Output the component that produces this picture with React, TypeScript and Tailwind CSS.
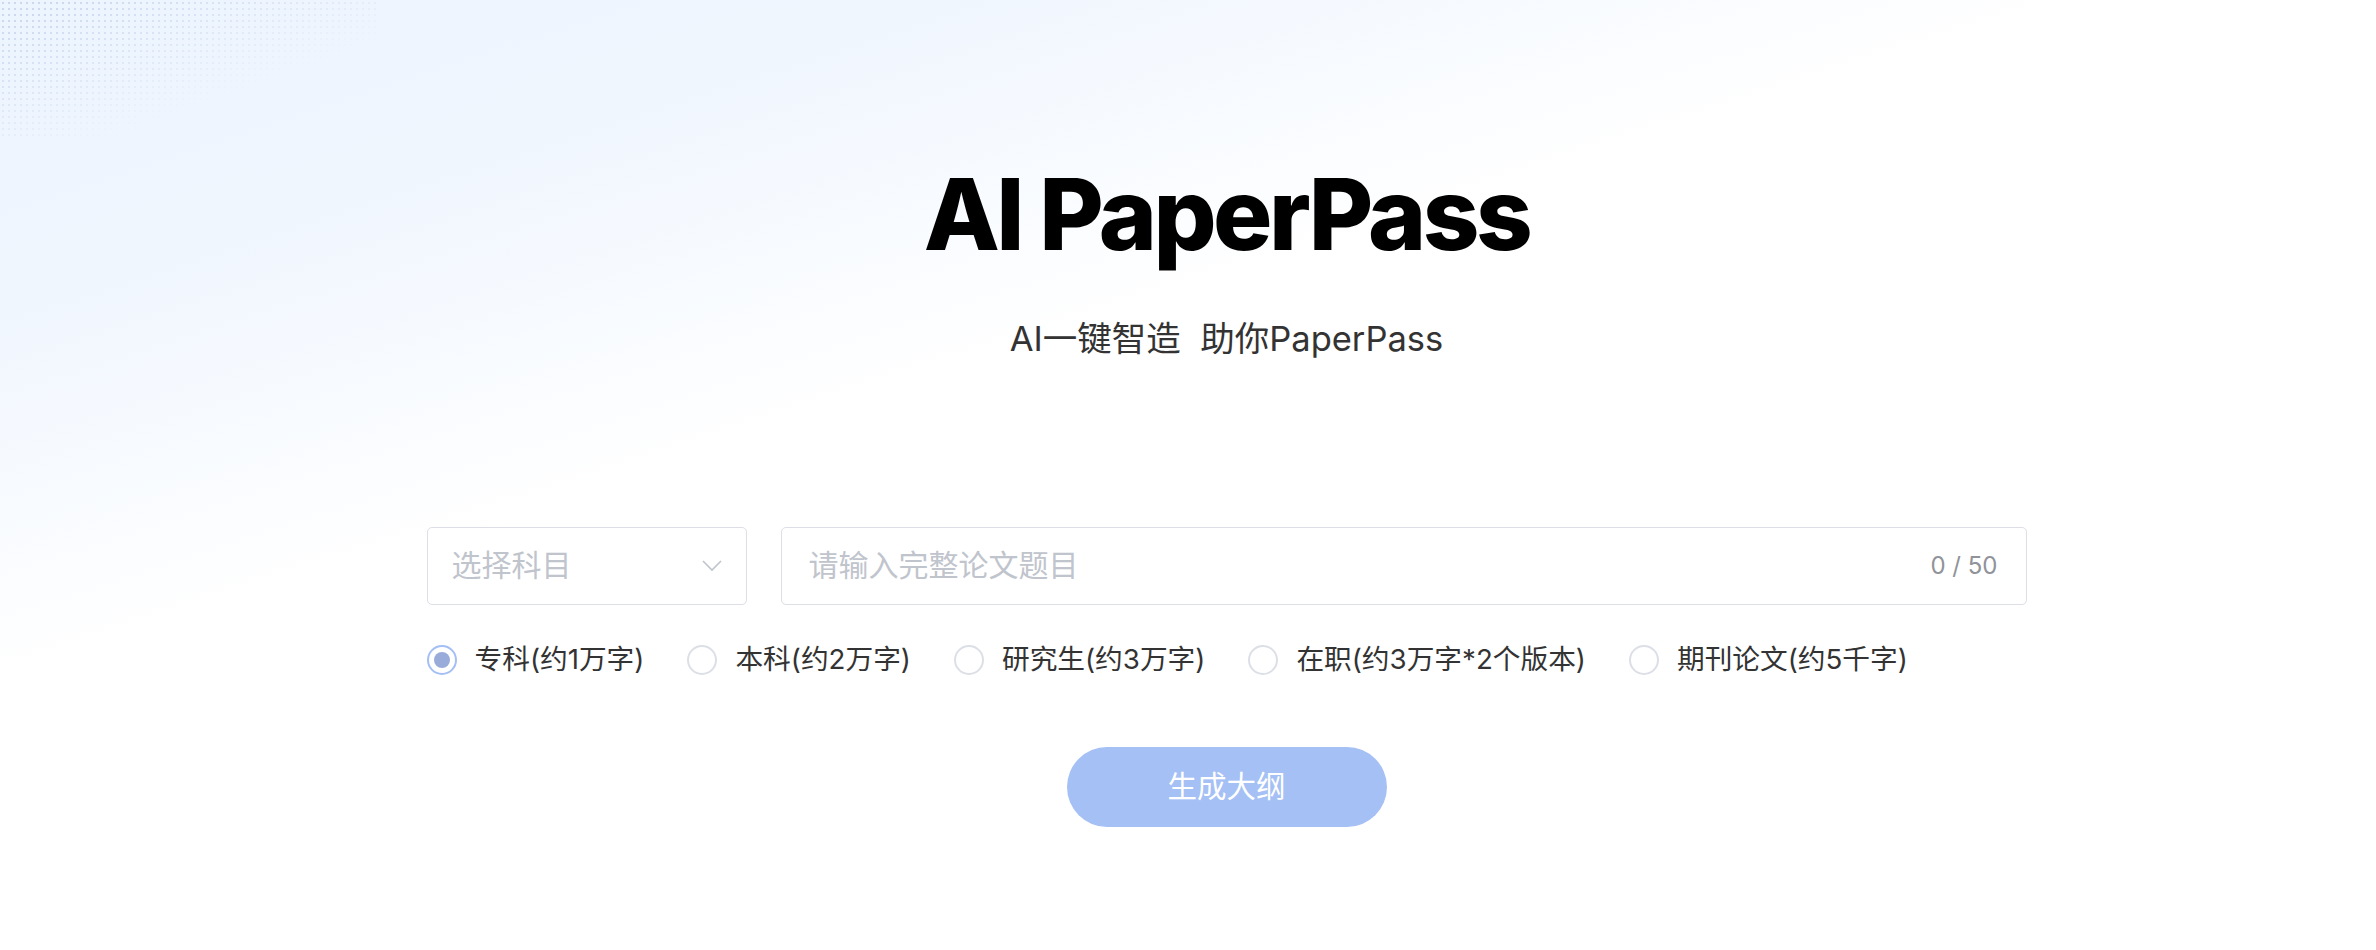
import { useState } from 'react';

const levels = [
  { id: 'zk', label: '专科(约1万字)' },
  { id: 'bk', label: '本科(约2万字)' },
  { id: 'yjs', label: '研究生(约3万字)' },
  { id: 'zz', label: '在职(约3万字*2个版本)' },
  { id: 'qk', label: '期刊论文(约5千字)' },
];

const cjk = 'font-["Inter","PingFang_SC","Noto_Sans_CJK_SC",sans-serif]';

const Radio = ({ checked, label, onClick }: { checked: boolean; label: string; onClick: () => void }) => (
  <label className="flex items-center cursor-pointer mr-[43px]" onClick={onClick}>
    <span
      className={
        checked
          ? 'w-[30px] h-[30px] rounded-full border-2 border-[#a4bff5] flex items-center justify-center bg-white'
          : 'w-[30px] h-[30px] rounded-full border-2 border-[#dcdfe6] bg-white'
      }
    >
      {checked && <span className="w-[16px] h-[16px] rounded-full bg-[#98abd9]" />}
    </span>
    <span className="ml-[18px] text-[27.7px] text-[#333333] leading-none">{label}</span>
  </label>
);

export default function App() {
  const [level, setLevel] = useState('zk');
  const [title, setTitle] = useState('');

  return (
    <div
      className={`relative min-h-[950px] w-full overflow-hidden bg-[linear-gradient(162deg,#ecf4fe_0%,#f0f6fe_18%,#f8fbff_30%,#ffffff_40%)] ${cjk}`}
    >
      {/* dotted decoration, top-left corner */}
      <div className="absolute left-0 top-0 w-[380px] h-[140px] bg-[radial-gradient(#b9c9e6_1px,transparent_1.2px)] bg-[length:6px_6px] [mask-image:linear-gradient(160deg,rgba(0,0,0,0.9)_10%,transparent_65%)] opacity-70" />

      <div className="relative flex flex-col items-center pl-[77px] pt-[165px]">
        <h1 className="font-['Inter',sans-serif] font-extrabold text-[99px] leading-none tracking-[-0.035em] text-black">
          AI PaperPass
        </h1>
        <p className="mt-[58px] text-[34.5px] leading-none text-[#333333]">AI一键智造&nbsp;&nbsp;助你PaperPass</p>

        <div className="mt-[170px] w-[1600px] flex gap-[34px]">
          <div className="w-[320px] h-[78px] border border-[#dcdfe6] rounded-[5px] bg-white flex items-center justify-between pl-[24px] pr-[24px]">
            <span className="text-[30px] text-[#c0c4cc]">选择科目</span>
            <svg width="20" height="12" viewBox="0 0 20 12" fill="none">
              <path d="M1 1l9 9 9-9" stroke="#c0c4cc" strokeWidth="1.6" />
            </svg>
          </div>
          <div className="flex-1 h-[78px] border border-[#dcdfe6] rounded-[5px] bg-white flex items-center pl-[27px] pr-[28px]">
            <input
              value={title}
              maxLength={50}
              onChange={(e) => setTitle(e.target.value)}
              placeholder="请输入完整论文题目"
              className="flex-1 bg-transparent outline-none text-[30px] text-[#333333] placeholder:text-[#c0c4cc]"
            />
            <span className="text-[24px] text-[#909399] font-['Inter',sans-serif]">{title.length} / 50</span>
          </div>
        </div>

        <div className="mt-[40px] w-[1600px] flex items-center">
          {levels.map((l) => (
            <Radio key={l.id} checked={level === l.id} label={l.label} onClick={() => setLevel(l.id)} />
          ))}
        </div>

        <button className="mt-[72px] w-[320px] h-[80px] rounded-full bg-[#a5c0f5] text-white text-[29.5px]">
          生成大纲
        </button>
      </div>
    </div>
  );
}
